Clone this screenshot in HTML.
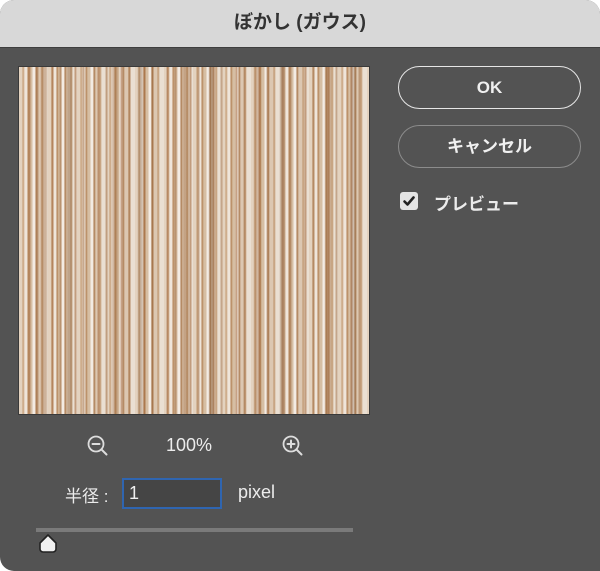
<!DOCTYPE html>
<html><head><meta charset="utf-8"><style>
html,body{margin:0;padding:0;background:#fff;width:600px;height:571px;overflow:hidden}
body{font-family:"Liberation Sans","Noto Sans CJK JP",sans-serif}
.win{position:absolute;left:0;top:0;width:600px;height:571px;background:#535353;border-radius:14px 14px 0 14px;overflow:hidden}
.title{position:absolute;left:0;top:0;width:600px;height:47px;background:#d8d8d8;border-bottom:1px solid #3e3e3e;text-align:center;line-height:46px;font-size:19px;font-weight:bold;color:#333}
.prev{position:absolute;left:18px;top:66px;width:352px;height:349px;background:
repeating-linear-gradient(90deg,rgba(150,95,50,0) 0 21px,rgba(150,95,50,.35) 23px 27px,rgba(150,95,50,0) 29px 47px,rgba(120,80,45,.3) 49px 52px,rgba(120,80,45,0) 54px 71px),
repeating-linear-gradient(90deg,rgba(160,100,55,0) 0 9px,rgba(160,100,55,.55) 10px 11px,rgba(160,100,55,0) 12px 17px,rgba(150,95,50,.45) 18px 19px,rgba(150,95,50,0) 20px 23px),
repeating-linear-gradient(90deg,#e3d2bf 0 3px,#c39a72 4px,#efe5da 6px 8px,#b38458 9px,#d6bea3 11px 13px,#f3ebe3 14px 16px,#a8774c 17px,#dcc7b1 19px 22px,#bd9269 23px,#eadfd2 25px 29px);
border:1px solid #3a3a3a;box-sizing:border-box}
.btn{position:absolute;left:398px;width:183px;height:43px;border-radius:22px;box-sizing:border-box;color:#f0f0f0;text-align:center;line-height:41px;font-size:17px;font-weight:bold}
.ok{top:66px;border:1.5px solid #e6e6e6}
.cn{top:125px;border:1.5px solid #8c8c8c}
.cb{position:absolute;left:400px;top:192px;width:18px;height:18px;background:#e4e4e4;border-radius:3px}
.lbl{position:absolute;color:#ececec;font-size:16px}
.input{position:absolute;left:122px;top:478px;width:100px;height:31px;box-sizing:border-box;border:2px solid #2f65b0;background:#454545;color:#f0f0f0;font-size:18px;line-height:27px;padding-left:5px}
.track{position:absolute;left:36px;top:528px;width:317px;height:4px;background:#7a7a7a}
</style></head><body>
<div class="win">
<div class="title">ぼかし (ガウス)</div>
<div class="prev"></div>
<div class="btn ok">OK</div>
<div class="btn cn">キャンセル</div>
<div class="cb"><svg width="18" height="18" viewBox="0 0 18 18"><path d="M4.5 9.5l3 3 6-7" fill="none" stroke="#222" stroke-width="2.6" stroke-linecap="round" stroke-linejoin="round"/></svg></div>
<div class="lbl" style="left:434px;top:190px;font-size:17px;font-weight:bold">プレビュー</div>
<svg style="position:absolute;left:86px;top:434px" width="26" height="26" viewBox="0 0 26 26"><circle cx="10" cy="10" r="7.5" fill="none" stroke="#ddd" stroke-width="1.8"/><path d="M6.5 10h7M15.5 15.5l5 5" stroke="#ddd" stroke-width="2" stroke-linecap="round"/></svg>
<div class="lbl" style="left:166px;top:435px;font-size:18px">100%</div>
<svg style="position:absolute;left:281px;top:434px" width="26" height="26" viewBox="0 0 26 26"><circle cx="10" cy="10" r="7.5" fill="none" stroke="#ddd" stroke-width="1.8"/><path d="M6.5 10h7M10 6.5v7M15.5 15.5l5 5" stroke="#ddd" stroke-width="2" stroke-linecap="round"/></svg>
<div class="lbl" style="left:65px;top:482px;font-size:17px">半径 :</div>
<div class="input">1</div>
<div class="lbl" style="left:238px;top:482px;font-size:18px">pixel</div>
<div class="track"></div>
<svg style="position:absolute;left:36px;top:533px" width="24" height="22" viewBox="0 0 24 22"><path d="M12 2L20 10v6a3 3 0 0 1-3 3H7a3 3 0 0 1-3-3v-6z" fill="#f0f0f0" stroke="#222" stroke-width="1.6" stroke-linejoin="round"/></svg>
</div>
</body></html>
